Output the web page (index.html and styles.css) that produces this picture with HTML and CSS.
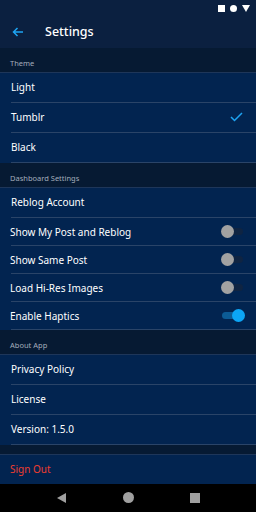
FILE: index.html
```html
<!DOCTYPE html>
<html lang="en">
<head>
  <meta charset="UTF-8" />
  <title>Settings</title>
  <link rel="stylesheet" href="styles.css">
</head>
<body>
  <div class="phone">

    <!-- status bar -->
    <div class="status-bar">
      <span class="st-square"></span>
      <span class="st-circle"></span>
      <span class="st-tri"></span>
    </div>

    <!-- app bar -->
    <div class="app-bar">
      <svg class="back" width="12" height="10" viewBox="0 0 12 10">
        <path d="M11 5H1.5M5.5 1L1.5 5l4 4" fill="none" stroke="#1ea4f2" stroke-width="1.5"/>
      </svg>
      <span class="title">Settings</span>
    </div>

    <div class="content">
      <div class="section-head">Theme</div>
      <div class="row">Light</div>
      <div class="row">Tumblr
        <svg class="check" width="13" height="10" viewBox="0 0 13 10">
          <path d="M1 5l3.5 3.5L12 1" fill="none" stroke="#1ea4f2" stroke-width="1.5"/>
        </svg>
      </div>
      <div class="row">Black</div>

      <div class="section-head">Dashboard Settings</div>
      <div class="row">Reblog Account</div>
      <div class="row short">Show My Post and Reblog <span class="toggle"></span></div>
      <div class="row short">Show Same Post <span class="toggle"></span></div>
      <div class="row short">Load Hi-Res Images <span class="toggle"></span></div>
      <div class="row short">Enable Haptics <span class="toggle on"></span></div>

      <div class="section-head">About App</div>
      <div class="row">Privacy Policy</div>
      <div class="row">License</div>
      <div class="row">Version: 1.5.0</div>

      <div class="spacer"></div>
      <div class="row signout">Sign Out</div>
    </div>

    <!-- nav bar -->
    <div class="nav-bar">
      <span class="nav-back"></span>
      <span class="nav-home"></span>
      <span class="nav-recent"></span>
    </div>
  </div>
</body>
</html>
```

FILE: styles.css
```css
* {
  box-sizing: border-box;
  margin: 0;
  padding: 0;
}
body {
  width: 256px;
  height: 512px;
  overflow: hidden;
  font-family: "Noto Sans", sans-serif;
  background: #022450;
  color: #fff;
}
.phone {
  display: flex;
  flex-direction: column;
  height: 512px;
}

/* status + app bar */
.status-bar {
  height: 17px;
  background: #0b2040;
  display: flex;
  justify-content: flex-end;
  align-items: center;
  gap: 5px;
  padding-right: 6px;
}
.st-square {
  width: 7px;
  height: 7px;
  background: #fff;
}
.st-circle {
  width: 7px;
  height: 7px;
  border-radius: 50%;
  background: #fff;
}
.st-tri {
  width: 0;
  height: 0;
  border-left: 4px solid transparent;
  border-right: 4px solid transparent;
  border-top: 7px solid #fff;
}
.app-bar {
  height: 33px;
  background: #0b2040;
  display: flex;
  align-items: center;
  padding-left: 12px;
}
.back {
  margin-right: 21px;
}
.title {
  font-size: 12.5px;
  font-weight: 500;
  color: #fff;
}

/* list */
.content {
  flex: 1;
  display: flex;
  flex-direction: column;
}
.section-head {
  height: 25px;
  background: #061a33;
  font-size: 7.5px;
  color: #a3adbb;
  padding: 0 0 4px 10px;
  display: flex;
  align-items: flex-end;
  border-bottom: 1px solid #1e3659;
}
.section-head:first-child {
  height: 25px;
}
.row {
  height: 30px;
  margin-left: 11px;
  padding-right: 12px;
  display: flex;
  align-items: center;
  justify-content: space-between;
  font-size: 10px;
  color: #fff;
  border-bottom: 1px solid #2a4468;
}
.row.short {
  height: 28px;
  margin-left: 0;
  padding-left: 10px;
  border-bottom: none;
  background-image: linear-gradient(#2a4468, #2a4468);
  background-size: calc(100% - 11px) 1px;
  background-position: right bottom;
  background-repeat: no-repeat;
}
.check {
  margin-right: 1px;
}
.spacer {
  height: 10px;
  background: #061a33;
  border-bottom: 1px solid #1e3659;
}
.row.signout {
  height: 29px;
  color: #ee3d2f;
  border-bottom: none;
  margin-left: 10px;
}

/* toggles */
.toggle {
  position: relative;
  width: 21px;
  height: 7px;
  border-radius: 4px;
  background: #0f2442;
  margin-right: 1px;
}
.toggle::after {
  content: "";
  position: absolute;
  left: -1px;
  top: -3px;
  width: 13px;
  height: 13px;
  border-radius: 50%;
  background: #a2a2a2;
}
.toggle.on {
  background: #0c5b94;
}
.toggle.on::after {
  left: 10px;
  background: #0ca6f6;
}

/* nav bar */
.nav-bar {
  height: 30px;
  background: #000;
  display: flex;
  align-items: center;
  justify-content: space-between;
  padding: 0 56px 0 57px;
}
.nav-back {
  width: 0;
  height: 0;
  border-top: 5px solid transparent;
  border-bottom: 5px solid transparent;
  border-right: 9px solid #a0a0a0;
}
.nav-home {
  width: 11px;
  height: 11px;
  border-radius: 50%;
  background: #a0a0a0;
}
.nav-recent {
  width: 10px;
  height: 10px;
  background: #a0a0a0;
}
```
